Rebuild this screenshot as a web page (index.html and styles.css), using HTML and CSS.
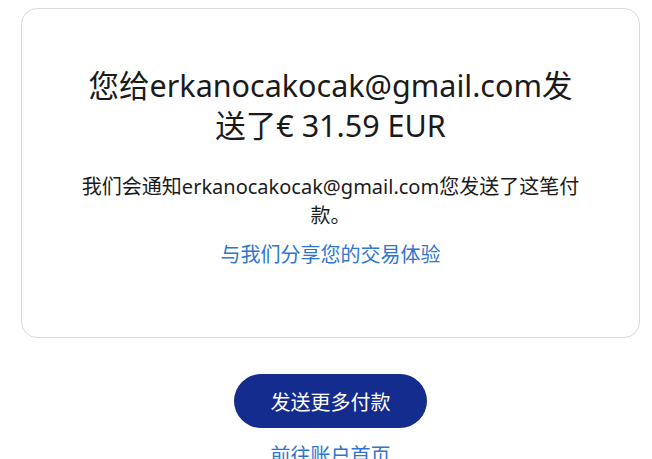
FILE: index.html
```html
<!DOCTYPE html>
<html lang="zh">
<head>
<meta charset="utf-8">
<title>付款已发送</title>
<link rel="stylesheet" href="styles.css">
</head>
<body>
<main class="page">
  <section class="card">
    <h1 class="title">您给erkanocakocak@gmail.com发送了€ 31.59 EUR</h1>
    <p class="note">我们会通知erkanocakocak@gmail.com您发送了这笔付款。</p>
    <a class="link" href="#">与我们分享您的交易体验</a>
  </section>
  <div class="actions">
    <a class="btn" href="#">发送更多付款</a>
    <a class="link home" href="#">前往账户首页</a>
  </div>
</main>
</body>
</html>
```

FILE: styles.css
```css
html, body {
  margin: 0;
  padding: 0;
  background: #ffffff;
}
body {
  font-family: "Noto Sans", "Noto Sans CJK SC", sans-serif;
  color: #1a1a1a;
  overflow: hidden;
}
.page {
  width: 619px;
  margin: 8px 0 0 21px;
}
.card {
  box-sizing: border-box;
  border: 1px solid #dcdad6;
  border-radius: 16px;
  height: 330px;
  padding: 56px 50px 0;
  display: flex;
  flex-direction: column;
  align-items: center;
  text-align: center;
}
.title {
  margin: 0;
  font-size: 30.5px;
  font-weight: 400;
  line-height: 40px;
  max-width: 500px;
}
.note {
  margin: 27px 0 0;
  font-size: 20px;
  line-height: 29px;
  max-width: 505px;
}
.link {
  color: #2f75cf;
  text-decoration: none;
  font-size: 20px;
  line-height: 28px;
  margin-top: 11px;
}
.actions {
  display: flex;
  flex-direction: column;
  align-items: center;
  padding-top: 36px;
}
.btn {
  display: flex;
  align-items: center;
  justify-content: center;
  width: 193px;
  height: 54px;
  border-radius: 27px;
  background: #142c8e;
  color: #ffffff;
  font-size: 20px;
  text-decoration: none;
}
.home {
  margin-top: 14px;
}
```
